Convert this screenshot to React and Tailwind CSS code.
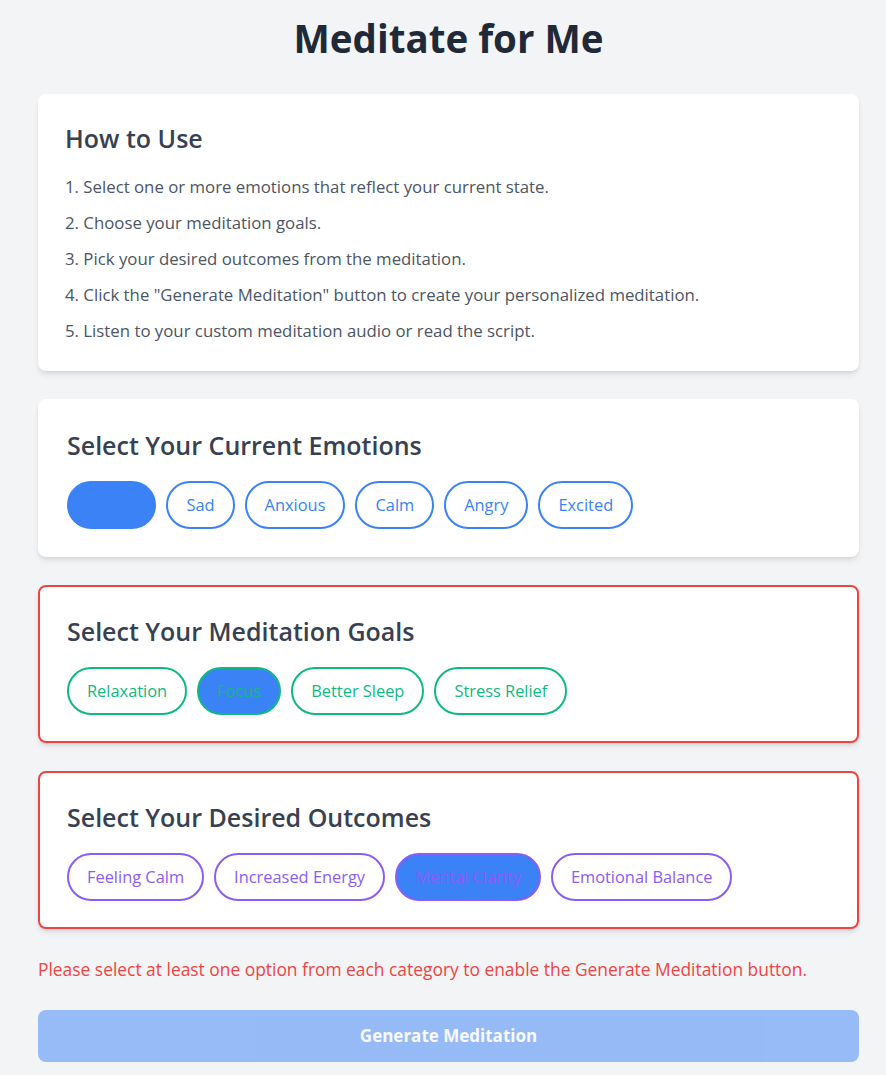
import React, { useState } from "react";

const emotions = ["Happy", "Sad", "Anxious", "Calm", "Angry", "Excited"];
const goals = ["Relaxation", "Focus", "Better Sleep", "Stress Relief"];
const outcomes = ["Feeling Calm", "Increased Energy", "Mental Clarity", "Emotional Balance"];

const steps = [
  "1. Select one or more emotions that reflect your current state.",
  "2. Choose your meditation goals.",
  "3. Pick your desired outcomes from the meditation.",
  '4. Click the "Generate Meditation" button to create your personalized meditation.',
  "5. Listen to your custom meditation audio or read the script.",
];

const Section = ({ title, options, selected, onToggle, tone, error }) => (
  <div
    className={`mb-7 rounded-lg bg-white shadow-md border-2 px-[27px] pt-[28px] pb-[26px] ${
      error ? "border-[#ef4444]" : "border-white"
    }`}
  >
    <h2 className="mb-[20px] text-[25px] leading-8 font-semibold text-[#374151]">{title}</h2>
    <div className="flex flex-wrap gap-[10px]">
      {options.map((opt) => (
        <button
          key={opt}
          onClick={() => onToggle(opt)}
          className={`rounded-full border-2 px-[18px] py-[10px] text-[16.4px] leading-6 ${tone} ${
            selected.includes(opt) ? "bg-[#3b82f6]" : "bg-white"
          }`}
        >
          {opt}
        </button>
      ))}
    </div>
  </div>
);

export default function App() {
  const [selEmotions, setSelEmotions] = useState(["Happy"]);
  const [selGoals, setSelGoals] = useState(["Focus"]);
  const [selOutcomes, setSelOutcomes] = useState(["Mental Clarity"]);

  const toggle = (list, setList) => (opt) =>
    setList(list.includes(opt) ? list.filter((o) => o !== opt) : [...list, opt]);

  return (
    <div
      className="min-h-screen bg-[#f3f4f6] pl-[38px] pr-[27px] pt-[16px] pb-[12px]"
      style={{ fontFamily: '"Open Sans", "Noto Sans", sans-serif' }}
    >
      <h1 className="mb-[34px] text-center text-[38.5px] leading-[44px] font-bold text-[#1f2937]">
        Meditate for Me
      </h1>

      <div className="mb-7 rounded-lg bg-white shadow-md px-[27px] pt-[28px] pb-[16px]">
        <h2 className="mb-[21px] text-[25px] leading-8 font-semibold text-[#374151]">How to Use</h2>
        <ul className="text-[16.8px] text-[#4b5563]">
          {steps.map((s) => (
            <li key={s} className="leading-6 mb-3">
              {s}
            </li>
          ))}
        </ul>
      </div>

      <Section
        title="Select Your Current Emotions"
        options={emotions}
        selected={selEmotions}
        onToggle={toggle(selEmotions, setSelEmotions)}
        tone="border-[#3b82f6] text-[#3b82f6]"
      />
      <Section
        title="Select Your Meditation Goals"
        options={goals}
        selected={selGoals}
        onToggle={toggle(selGoals, setSelGoals)}
        tone="border-[#10b981] text-[#10b981]"
        error
      />
      <Section
        title="Select Your Desired Outcomes"
        options={outcomes}
        selected={selOutcomes}
        onToggle={toggle(selOutcomes, setSelOutcomes)}
        tone="border-[#8b5cf6] text-[#8b5cf6]"
        error
      />

      <p className="mb-[29px] text-[17.4px] leading-6 font-medium text-[#ef4444]">
        Please select at least one option from each category to enable the Generate Meditation button.
      </p>

      <button
        disabled
        className="w-full rounded-lg bg-[#3b82f6] py-[14px] text-[17px] leading-6 font-bold text-white opacity-50"
      >
        Generate Meditation
      </button>
    </div>
  );
}
